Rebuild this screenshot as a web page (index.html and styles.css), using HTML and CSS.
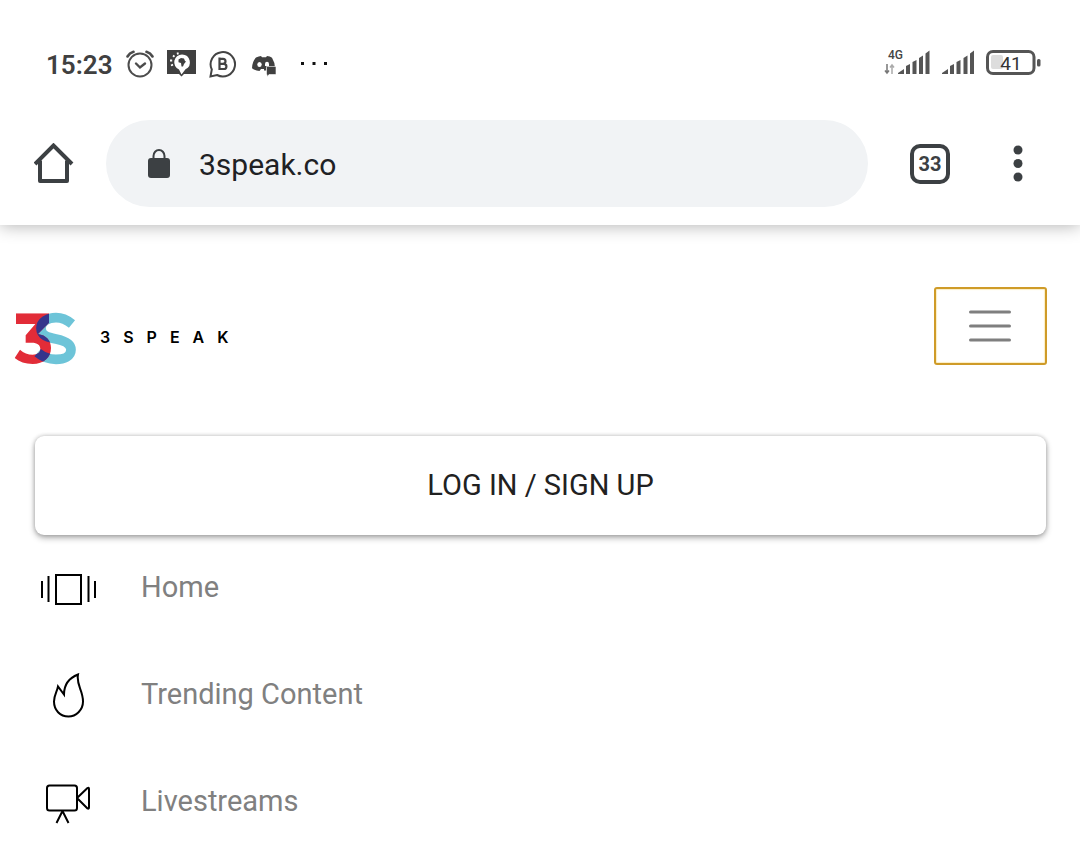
FILE: index.html
```html
<!DOCTYPE html>
<html lang="en">
<head>
<meta charset="utf-8">
<meta name="viewport" content="width=device-width, initial-scale=1">
<title>3Speak</title>
<link rel="stylesheet" href="styles.css">
</head>
<body>
<header class="browser">
  <div class="status">
    <div class="status-left">
      <time class="clock">15:23</time>
      <svg class="status-icon" viewBox="0 0 28 28" fill="none" stroke="#4c4c4c" stroke-width="2" stroke-linecap="round"><circle cx="14" cy="15" r="11.500"/><path d="M10 13.500l4 4 5-4" stroke-width="2.400"/><path d="M1.500 6.500Q3.500 3 7.500 1.800M26.500 6.500Q24.500 3 20.500 1.800" stroke-width="2.600"/></svg>
      <svg class="status-icon wide" viewBox="0 0 29 28"><path d="M0 0h29v24H17l-2.500 2.500L12 24H0z" fill="#404040"/><path d="M15 4.500a7.800 7.800 0 0 1 3.500 14.800L14.500 24.500 12 19.500A7.800 7.800 0 0 1 15 4.500z" fill="#fff"/><path d="M11.500 9.500l2.500-1.500 3 .5 1 2.500 1 .5-2 2.500-1 2.500h-1.500l-.5-3.500-2.500-.8z" fill="#404040"/><path d="M10.500 2.500l.5 2M6 5.500l1.500 1.300M3 10.500h2.200M4 15.500l2-.8" stroke="#fff" stroke-width="1.800"/></svg>
      <svg class="status-icon" viewBox="0 0 28 28" fill="none" stroke="#444" stroke-width="2"><path d="M1.500 26.500L2.800 19.500A12.200 12.200 0 1 1 8 25z"/><path d="M10.500 8.800h3.500a2.300 2.300 0 0 1 0 5h-3.500M10.500 13.800h4.300a2.500 2.500 0 0 1 0 5.200h-4.300V7.600" stroke-width="2.200"/></svg>
      <svg class="status-icon" viewBox="0 0 28 28"><path d="M6 7.500Q9 6 11 6l1 1.300h4L17 6q3 .3 5 1.700 3 5 3 10h-8.500v2.800H14v-1.500h-3L9.500 21Q5 20.500 2 18.300 2 12 6 7.500z" fill="#404040"/><ellipse cx="9.500" cy="14.500" rx="2.200" ry="2.500" fill="#fff"/><path d="M15 14q0-2.300 2-2.300T19 14v2h-4z" fill="#fff"/><path d="M16.500 16.500h9.500v8h-7l-2 2v-2h-.5z" fill="#404040" stroke="#fff" stroke-width=".6"/></svg>
      <svg class="status-icon more" viewBox="0 0 28 28"><path d="M1 12h3v3H1zM12.500 12h3v3h-3zM24 12h3v3h-3z" fill="#111"/></svg>
    </div>
    <div class="status-right">
      <svg class="signal-data" viewBox="0 -4 47 36"><text class="network" x="4" y="9">4G</text><path d="M3 14v9M1 20.500L3 23l2-2.500" fill="none" stroke="#777" stroke-width="1.500"/><path d="M8 24v-9M6 17.500L8 15l2 2.500" fill="none" stroke="#aaa" stroke-width="1.500"/><path d="M14 24v-1l6-4v5zM22 24v-8l4-2v10zM28.500 24V12l4-2v14zM35 24V8l4-2.500V24zM41.500 24V3.500l4-3V24z" fill="#555"/></svg>
      <svg class="signal" viewBox="0 0 33 28"><path d="M0 24v-1l6-4v5zM8 24v-8l4-2v10zM14.500 24V12l4-2v14zM21.500 24V8l4-2.500V24zM28 24V3.500l4-3V24z" fill="#555"/></svg>
      <svg class="battery" viewBox="0 0 55 28"><rect x="5" y="5" width="12" height="14" rx="2" fill="#ddd"/><rect x="1.500" y="1.500" width="46.500" height="22" rx="5.500" fill="none" stroke="#555" stroke-width="3"/><rect x="51" y="9" width="3.500" height="7.500" rx="1.500" fill="#555"/><text class="charge" x="25" y="20" text-anchor="middle">41</text></svg>
    </div>
  </div>
  <div class="toolbar">
    <button class="tool" aria-label="Home page"><svg width="40" height="42" viewBox="0 0 40 42" fill="none" stroke="#3c4043" stroke-width="4" stroke-linejoin="round"><path d="M1 21L19.500 2.500 38 21" stroke-linejoin="miter"/><path d="M6 17.500V38h27V17.500"/></svg></button>
    <label class="address">
      <svg width="24" height="32" viewBox="0 0 24 32"><path d="M6.500 11V8a5.500 6 0 0 1 11 0v3" fill="none" stroke="#3c4043" stroke-width="2"/><rect x="1" y="10" width="22" height="20" rx="3" fill="#3c4043"/></svg>
      <input class="url" type="text" value="3speak.co" aria-label="Address">
    </label>
    <button class="tabs" aria-label="33 open tabs">33</button>
    <button class="tool" aria-label="More options"><svg width="10" height="38" viewBox="0 0 10 38" fill="#3c4043"><circle cx="5" cy="5" r="4.500"/><circle cx="5" cy="18.500" r="4.500"/><circle cx="5" cy="32" r="4.500"/></svg></button>
  </div>
</header>
<nav class="site">
  <div class="brand-row">
    <a class="brand" href="#">
      <svg width="64" height="53" viewBox="42 50 192 159" aria-hidden="true">
        <defs><clipPath id="three"><path d="M48 54H147V82L114 116C138 120 153 134 153 158C153 187 131 206 98 206C76 206 58 200 44 188L60 163C71 173 84 178 98 178C112 178 121 172 121 161C121 149 112 142 95 142H77V120L106 86H48Z"/></clipPath></defs>
        <path d="M216 86C200 73 186 67 168 67C143 67 123 79 123 99C123 121 143 126 168 131C198 137 213 146 213 163C213 183 192 192 168 192C147 192 129 186 113 172" fill="none" stroke="#6dc4d8" stroke-width="29"/>
        <g clip-path="url(#three)"><path d="M40 50H160V210H40Z" fill="#e22c38"/><path d="M216 86C200 73 186 67 168 67C143 67 123 79 123 99C123 121 143 126 168 131C198 137 213 146 213 163C213 183 192 192 168 192C147 192 129 186 113 172" fill="none" stroke="#35358c" stroke-width="29"/></g>
      </svg>
      <span class="brand-name">3SPEAK</span>
    </a>
    <button class="menu-toggle" aria-label="Toggle navigation"><svg width="43" height="34" viewBox="0 0 43 34" stroke="#7f7f7f" stroke-width="3" stroke-linecap="round"><path d="M1.500 3h39M1.500 17h39M1.500 31h39"/></svg></button>
  </div>
  <button class="login">LOG IN / SIGN UP</button>
  <ul class="links">
    <li><a class="link" href="#"><svg width="58" height="46" viewBox="0 0 58 46" fill="none" stroke="#000" stroke-width="2"><rect x="17" y="9" width="25" height="29"/><path d="M3 15v17M9.500 10v26M49.500 10v26M56 15v17"/></svg><span class="link-text">Home</span></a></li>
    <li><a class="link" href="#"><svg width="58" height="46" viewBox="0 0 58 46" fill="none" stroke="#000" stroke-width="2"><path d="M39 1.500C37 12 44 17 44 28.500C44 37 37 43.500 29.500 43.500C21 43.500 15 37 15 28.500C15 22 18 19 19 13.500L25 21.500C25 11 30 5 39 1.500Z"/></svg><span class="link-text">Trending Content</span></a></li>
    <li><a class="link" href="#"><svg width="58" height="46" viewBox="0 0 58 46" fill="none" stroke="#000" stroke-width="2" stroke-linejoin="round"><rect x="8" y="5.500" width="30" height="25" rx="2.500"/><path d="M38 18L48.500 8Q50 7 50 9V27Q50 29.500 48.500 28.500zM17.500 43L23.500 31 29.500 43"/></svg><span class="link-text">Livestreams</span></a></li>
  </ul>
</nav>
</body>
</html>
```
FILE: styles.css
```css
* { box-sizing: border-box; }
body {
  margin: 0;
  background: #fff;
  font-family: Roboto, "Liberation Sans", sans-serif;
}
button { border: 0; padding: 0; background: none; font-family: inherit; }
svg { display: block; flex: none; }
a { text-decoration: none; }

.browser {
  padding: 44px 39px 18px 34px;
  background: #fff;
  box-shadow: 0 1px 16px rgba(0, 0, 0, 0.3);
}
.status, .status-left, .status-right, .toolbar, .address { display: flex; align-items: center; }
.status { justify-content: space-between; height: 40px; padding-left: 12px; }
.status-left { gap: 13px; }
.status-right { gap: 11px; }
.clock { font-size: 26px; font-weight: 600; line-height: 30px; padding-top: 2px; color: #404040; }
.status-icon { width: 28px; height: 28px; }
.status-icon.wide { width: 29px; }
.status-icon.more { margin-left: 9px; }
.signal-data { width: 47px; height: 36px; }
.signal { width: 33px; height: 28px; }
.battery { width: 55px; height: 28px; }
.network { font-size: 12px; font-weight: 500; fill: #444; }
.charge { font-size: 19px; font-weight: 400; fill: #333; }

.toolbar { margin-top: 36px; }
.address {
  flex: 1;
  min-width: 0;
  height: 87px;
  margin: 0 42px 0 32px;
  padding: 0 41px;
  gap: 28px;
  border-radius: 44px;
  background: #f1f3f5;
}
.url {
  flex: 1;
  min-width: 0;
  border: 0;
  padding: 2px 0 0;
  background: transparent;
  font: 30px Roboto, sans-serif;
  color: #202124;
  outline: 0;
}
.tabs {
  width: 40px;
  height: 40px;
  margin-right: 63px;
  border: 4px solid #3c4043;
  border-radius: 10px;
  font-size: 20px;
  font-weight: 700;
  line-height: 30px;
  color: #3c4043;
}
.toolbar .tool:last-child { margin-right: 18px; }

.site { padding: 62px 33px 0; }
.brand-row {
  display: flex;
  align-items: flex-end;
  justify-content: space-between;
  margin-left: -19px;
}
.brand { display: flex; align-items: center; gap: 22px; }
.brand-name {
  padding-bottom: 4px;
  font: 600 16px Inter, sans-serif;
  letter-spacing: 13px;
  color: #000;
}
.menu-toggle {
  display: grid;
  place-items: center;
  width: 113px;
  height: 78px;
  border: 2px solid #cf9b28;
  border-radius: 3px;
  box-shadow: inset 0 0 1px 1px #fbeec4;
}
.login {
  display: block;
  width: calc(100% - 3px);
  height: 99px;
  margin: 71px 1px 0 2px;
  padding-bottom: 2px;
  border-radius: 9px;
  background: #fff;
  box-shadow: 0 3px 6px rgba(0, 0, 0, 0.3), 0 0 4px rgba(0, 0, 0, 0.22);
  font-size: 29px;
  color: #212121;
}
.links { list-style: none; margin: 0; padding: 24px 6px 0; display: grid; gap: 47px; }
.link {
  display: flex;
  align-items: center;
  gap: 44px;
  height: 60px;
  font-size: 29px;
  color: #808080;
}
.link-text { padding-bottom: 4px; }
```
